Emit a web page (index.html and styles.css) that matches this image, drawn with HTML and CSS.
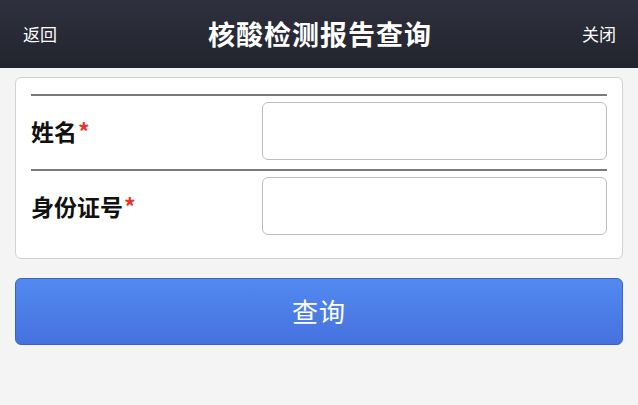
FILE: index.html
```html
<!DOCTYPE html>
<html lang="zh-CN">
<head>
<meta charset="utf-8">
<title>核酸检测报告查询</title>
<link rel="stylesheet" href="styles.css">
</head>
<body>
<header class="topbar">
  <span class="nav-link">返回</span>
  <h1 class="title">核酸检测报告查询</h1>
  <span class="nav-link">关闭</span>
</header>
<main class="content">
  <form class="card">
    <div class="row">
      <label class="label">姓名<span class="req">*</span></label>
      <input class="field" type="text">
    </div>
    <div class="row">
      <label class="label">身份证号<span class="req">*</span></label>
      <input class="field" type="text">
    </div>
  </form>
  <button class="submit" type="button">查询</button>
</main>
</body>
</html>
```
FILE: styles.css
```css
* { box-sizing: border-box; }
html, body { margin: 0; padding: 0; }
body {
  background: #f4f4f4;
  font-family: "Noto Sans CJK SC", "Noto Sans", sans-serif;
  width: 638px;
  height: 405px;
  overflow: hidden;
}
.topbar {
  height: 68px;
  background: linear-gradient(#2e303d, #22242e);
  display: flex;
  align-items: center;
  justify-content: space-between;
  padding: 0 22px 0 23px;
  color: #fff;
}
.nav-link {
  font-size: 17px;
  line-height: 1;
  padding-bottom: 1px;
}
.title {
  margin: 0 0 0 1px;
  font-size: 27px;
  font-weight: 700;
  line-height: 1;
  letter-spacing: 1px;
  padding-bottom: 1px;
}
.content {
  padding: 9px 15px 0;
}
.card {
  margin: 0;
  background: #fff;
  border: 1px solid #d2d2d2;
  border-radius: 6px;
  padding: 16px 15px 15px;
}
.row {
  border-top: 2px solid #7a7a7a;
  padding: 6px 0 9px;
  display: flex;
  align-items: center;
}
.row + .row { padding-bottom: 8px; }
.label {
  width: 231px;
  flex: none;
  font-size: 23px;
  font-weight: 700;
  color: #111;
  line-height: 1;
}
.req {
  color: #e5322d;
  margin-left: 1px;
}
.field {
  flex: 1;
  height: 58px;
  border: 1px solid #bdbdbd;
  border-radius: 6px;
  background: #fff;
  margin: 0;
  padding: 0 10px;
  font-size: 20px;
  outline: none;
}
.submit {
  display: block;
  width: 100%;
  margin-top: 19px;
  height: 67px;
  border: 1px solid #3d63c2;
  border-radius: 6px;
  background: linear-gradient(#5289f0, #4672df);
  color: #fff;
  font-family: "Noto Sans CJK SC", "Noto Sans", sans-serif;
  font-size: 26px;
  font-weight: 400;
  padding: 0 0 3px;
  letter-spacing: 1px;
}
```
